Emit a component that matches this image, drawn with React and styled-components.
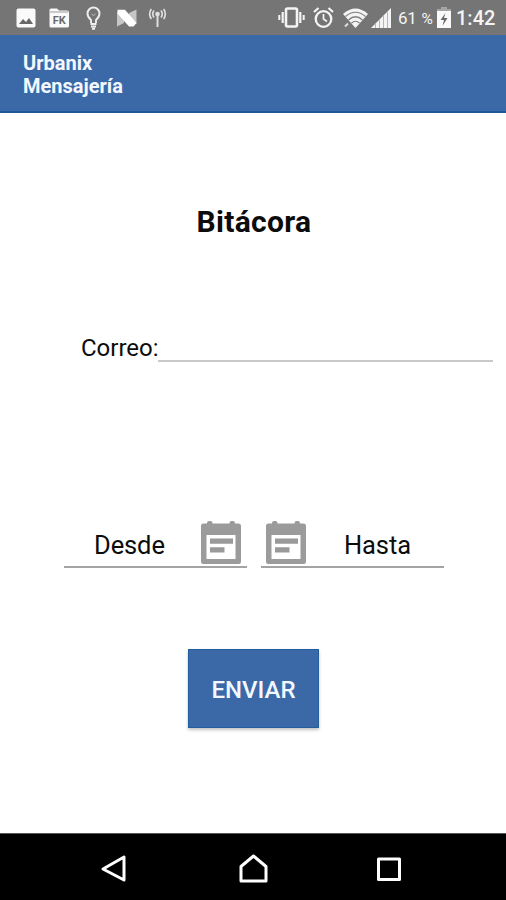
import React from "react";
import styled, { createGlobalStyle } from "styled-components";

const GlobalStyle = createGlobalStyle`
  * { box-sizing: border-box; }
  body { margin: 0; background: #fff; font-family: Roboto, "Liberation Sans", sans-serif; }
`;

const Screen = styled.div`
  width: 506px;
  height: 900px;
  display: flex;
  flex-direction: column;
  overflow: hidden;
  background: #fff;
  color: #0c0c0c;
`;

const StatusBar = styled.div`
  height: 35px;
  flex: none;
  display: flex;
  align-items: center;
  justify-content: space-between;
  padding: 0 11px 0 16px;
  background: #757575;
  color: #f4f4f4;
`;

const IconGroup = styled.div`
  display: flex;
  align-items: center;
`;

const StatusIcon = styled.svg`
  display: block;
  flex: none;
  overflow: visible;
  margin-left: ${(p) => p.$before || 0}px;
`;

const Percent = styled.span`
  width: 37px;
  margin-left: 7px;
  font-size: 17px;
  line-height: 34px;
  white-space: nowrap;
  padding-top: 2px;
  word-spacing: 1px;
  letter-spacing: -0.3px;
  small { font-size: 15.5px; }
`;

const Clock = styled.span`
  width: 39px;
  margin-left: 5px;
  font-size: 20px;
  line-height: 35px;
  padding-top: 1px;
  font-weight: 500;
  white-space: nowrap;
`;

const AppBar = styled.header`
  height: 78px;
  flex: none;
  padding: 17px 23px 0;
  background: #3b69a8;
  border-bottom: 2px solid #215798;
`;

const AppName = styled.div`
  font-size: 20px;
  line-height: 23px;
  font-weight: 700;
  color: #f3f8ff;
`;

const Content = styled.main`
  flex: 1;
  display: flex;
  flex-direction: column;
  align-items: center;
`;

const Heading = styled.h1`
  margin: 91px 0 0;
  font-size: 30px;
  line-height: 36px;
  font-weight: 700;
  padding-left: 2px;
  letter-spacing: 0.3px;
`;

const EmailRow = styled.label`
  display: flex;
  align-self: stretch;
  height: 36px;
  margin: 86px 13px 0 81px;
`;

const EmailLabel = styled.span`
  width: 77px;
  font-size: 24px;
  line-height: 44px;
  white-space: nowrap;
`;

const EmailLine = styled.span`
  flex: 1;
  border-bottom: 2px solid #c9c9c9;
`;

const DateRow = styled.div`
  display: flex;
  gap: 14px;
  margin: 146px 0 0 2px;
`;

const DateField = styled.div`
  display: flex;
  flex-direction: ${(p) => (p.$reverse ? "row-reverse" : "row")};
  align-items: flex-start;
  width: 183px;
  height: 60px;
  padding: ${(p) => (p.$reverse ? "12px 0 0 4px" : "12px 5px 0 0")};
  border-bottom: 2px solid #a3a3a3;
`;

const DateLabel = styled.span`
  flex: 1;
  padding: 10px 0 0 ${(p) => p.$inset}px;
  font-size: 25.5px;
  line-height: 30px;
  letter-spacing: -0.1px;
`;

const CalendarSvg = styled.svg`
  display: block;
  width: 42px;
  height: 45px;
  flex: none;
`;

const SendButton = styled.button`
  width: 131px;
  height: 79px;
  margin-top: 81px;
  padding: 3px 0 0 1px;
  border: 1px solid #245c9e;
  background: #3b69a8;
  color: #f3f8ff;
  font: 500 24px/30px Roboto, "Liberation Sans", sans-serif;
  box-shadow: 0 2px 3px rgba(0, 0, 0, 0.24);
`;

const NavBar = styled.nav`
  height: 67px;
  flex: none;
  display: flex;
  justify-content: space-between;
  align-items: center;
  padding: 3px 104px 0 100px;
  border-top: 1px solid #555;
  background: #000;
`;

const NavIcon = styled.svg`
  display: block;
  flex: none;
  overflow: visible;
  fill: none;
  stroke: #fff;
  stroke-width: 3;
  stroke-linejoin: round;
`;

const Calendar = () => (
  <CalendarSvg viewBox="0 0 42 45">
    <path
      fill="#9b9b9b"
      fillRule="evenodd"
      d="M7 3.500V3Q7 1 9 1h1.500q2 0 2 2v.500h17V3Q29.500 1 31.500 1H33q2 0 2 2v.500h3.500Q41 3.500 41 6v35.500q0 2.500-2.500 2.500h-35Q1 44 1 41.500V6Q1 3.500 3.500 3.500zM6.500 15v24h29V15z"
    />
    <path fill="#999" d="M10 18.500h23v5.200H10zM10 27.300h14.500v5.200H10z" />
  </CalendarSvg>
);

const Notifications = () => (
  <IconGroup>
    <StatusIcon width="20" height="20" viewBox="0 0 20 20">
      <rect x="0.500" y="0.500" width="19" height="19" rx="2" fill="#fafafa" />
      <path d="M3 16l4-5 3 3 3-4 4 6z" fill="#686868" />
    </StatusIcon>
    <StatusIcon $before={13} width="20" height="20" viewBox="0 0 20 20">
      <path d="M2 .5h6l2 2h8q2 0 2 2V18q0 1.500-2 1.500H2Q.5 19.500.5 18V2Q.5.5 2 .5z" fill="#fafafa" />
      <path d="M1 4h18" fill="none" stroke="#999" />
      <text x="10.300" y="15.500" textAnchor="middle" fontSize="11" fontWeight="700" fill="#6b6b6b">FK</text>
    </StatusIcon>
    <StatusIcon $before={17} width="15" height="24" viewBox="0 0 15 24" fill="none" stroke="#efefef">
      <path d="M5 17v-3Q1.500 11 1.500 7.500a6 6 0 0 1 12 0Q13.500 11 10 14v3" strokeWidth="1.900" />
      <path d="M5.500 8l2 1.500 2-1.500" strokeWidth="1" opacity="0.600" />
      <path d="M4.500 18h6M5 20.500h5M6 22.700h3" strokeWidth="2" />
    </StatusIcon>
    <StatusIcon $before={15} width="21" height="18" viewBox="0 0 21 18">
      <path d="M1 3l7 5v6l-7 3.500zM13 4l7.500-3.500V15L13 12z" fill="#c6c6c6" />
      <path d="M1.500.8H9L20.500 14l-3 3.500H13L1.500 4.500z" fill="#fff" />
    </StatusIcon>
    <StatusIcon $before={12} width="17" height="20" viewBox="0 0 17 20" fill="none" stroke="#dedede" strokeWidth="1.700">
      <path d="M8.500 7v12" strokeWidth="2" />
      <circle cx="8.500" cy="6" r="1.500" fill="#eee" />
      <path d="M5 2.500q-2.500 3.500 0 7M2.300 1q-3.200 5 0 10M12 2.500q2.500 3.500 0 7M14.700 1q3.200 5 0 10" />
    </StatusIcon>
  </IconGroup>
);

const SystemStatus = () => (
  <IconGroup>
    <StatusIcon width="27" height="21" viewBox="0 0 27 21" fill="none" stroke="#f4f4f4">
      <rect x="8" y="1.500" width="11" height="18" rx="1.500" strokeWidth="2.600" />
      <path d="M4.700 5v11M22.300 5v11" strokeWidth="2.200" />
      <path d="M1.300 8v5M25.700 8v5" strokeWidth="2" />
    </StatusIcon>
    <StatusIcon $before={8} width="21" height="21" viewBox="0 0 21 21" fill="none" stroke="#f4f4f4">
      <circle cx="10.500" cy="12" r="7.800" strokeWidth="2.300" />
      <path d="M10.500 7v5l3.500 2.500" strokeWidth="1.700" />
      <path d="M1 5l4.500-4M20 5l-4.500-4" strokeWidth="2.200" />
    </StatusIcon>
    <StatusIcon $before={9} width="25" height="20" viewBox="0 0 25 20">
      <path d="M0 6Q12.500-5 25 6L12.500 20z" fill="#f4f4f4" />
      <path d="M2.500 8.500Q12.500 0 22.500 8.500M5.500 12q7-6.500 14 0M8.500 15q4-3.500 8 0" fill="none" stroke="#808080" strokeWidth="1.200" />
      <path d="M2 18.500l3-3" stroke="#ddd" strokeWidth="2" />
    </StatusIcon>
    <StatusIcon $before={3} width="20" height="20" viewBox="0 0 20 20">
      <path d="M20 0v20H0z" fill="#f4f4f4" />
      <path d="M4.500 16v4M8.500 12v8M12.500 8v12M16.500 4v16" stroke="#b5b5b5" strokeWidth="1" />
    </StatusIcon>
    <Percent>61 <small>%</small></Percent>
    <StatusIcon $before={2} width="14" height="21" viewBox="0 0 14 21">
      <path d="M4 0h6v2h4v3H0V2h4z" fill="#a5a5a5" />
      <path d="M0 4h14v17H0z" fill="#fafafa" />
      <path d="M8.500 6L3.500 13H7l-1.500 6 5-8H7z" fill="#686868" />
    </StatusIcon>
    <Clock>1:42</Clock>
  </IconGroup>
);

export default function App() {
  return (
    <Screen>
      <GlobalStyle />
      <StatusBar>
        <Notifications />
        <SystemStatus />
      </StatusBar>
      <AppBar>
        <AppName>Urbanix<br />Mensajería</AppName>
      </AppBar>
      <Content>
        <Heading>Bitácora</Heading>
        <EmailRow>
          <EmailLabel>Correo:</EmailLabel>
          <EmailLine />
        </EmailRow>
        <DateRow>
          <DateField>
            <DateLabel $inset={30}>Desde</DateLabel>
            <Calendar />
          </DateField>
          <DateField $reverse>
            <DateLabel $inset={37}>Hasta</DateLabel>
            <Calendar />
          </DateField>
        </DateRow>
        <SendButton>ENVIAR</SendButton>
      </Content>
      <NavBar>
        <NavIcon width="27" height="30" viewBox="0 0 27 30">
          <path d="M3 15L24 3v23z" />
        </NavIcon>
        <NavIcon width="30" height="30" viewBox="0 0 30 30">
          <path d="M4 27V12.500L16.500 2 29 12.500V27z" />
        </NavIcon>
        <NavIcon width="26" height="30" viewBox="0 0 26 30">
          <rect x="2.500" y="5" width="21" height="20.500" />
        </NavIcon>
      </NavBar>
    </Screen>
  );
}
